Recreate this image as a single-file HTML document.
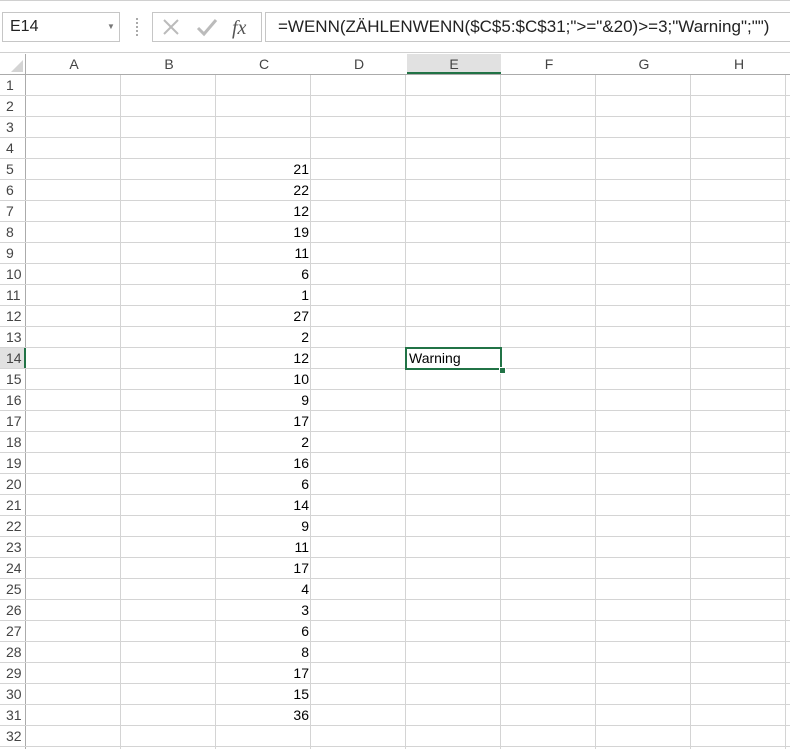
<!DOCTYPE html>
<html><head><meta charset="utf-8"><style>
body{margin:0;width:790px;height:749px;overflow:hidden;background:#fff;font-family:"Liberation Sans",sans-serif;position:relative}
.a{position:absolute}
#grid{left:26px;top:75px;width:764px;height:674px;
background-image:repeating-linear-gradient(to right,transparent 0 94px,#d4d4d4 94px 95px),repeating-linear-gradient(to bottom,transparent 0 20px,#d4d4d4 20px 21px)}
.rh{position:absolute;left:0;width:25px;height:20px;font-size:14px;color:#444;line-height:20px;padding-left:6px;box-sizing:border-box}
.ch{position:absolute;top:54px;width:94px;height:20px;text-align:center;font-size:14px;color:#444;line-height:20px}
.n{position:absolute;left:217px;width:92px;text-align:right;font-size:14px;line-height:20px;height:20px;color:#000}
</style></head><body>
<div class="a" style="left:0;top:0;width:790px;height:1px;background:#d0d0d0"></div>
<div class="a" style="left:2px;top:12px;width:118px;height:30px;border:1px solid #c6c6c6;box-sizing:border-box;font-size:16px;line-height:28px;padding-left:7px;color:#222">E14<span class="a" style="left:104px;top:0;font-size:8px;color:#777">▼</span></div>
<div class="a" style="left:136px;top:18px;width:2px;height:18px;background:repeating-linear-gradient(to bottom,#aaa 0 2px,transparent 2px 4px)"></div>
<div class="a" style="left:152px;top:12px;width:110px;height:30px;border:1px solid #c6c6c6;box-sizing:border-box"></div>
<svg class="a" style="left:160px;top:16px" width="100" height="24"><path d="M4 4L18 18M18 4L4 18" stroke="#bbb" stroke-width="2"/><path d="M38 12L44 18L56 4" stroke="#bbb" stroke-width="3" fill="none"/><text x="72" y="18" font-family="Liberation Serif" font-style="italic" font-size="20" fill="#555">fx</text></svg>
<div class="a" style="left:265px;top:12px;width:530px;height:30px;border:1px solid #c6c6c6;box-sizing:border-box;font-size:17px;line-height:28px;padding-left:12px;color:#222;white-space:nowrap">=WENN(ZÄHLENWENN($C$5:$C$31;"&gt;="&amp;20)&gt;=3;"Warning";"")</div>
<div class="a" style="left:0;top:52px;width:790px;height:1px;background:#d0d0d0"></div>
<div class="a" style="left:0;top:54px;width:790px;height:21px;border-bottom:1px solid #ababab;box-sizing:border-box"></div>
<svg class="a" style="left:10px;top:59px" width="14" height="14"><path d="M13 1V13H1Z" fill="#d4d4d4"/></svg>
<div class="a" style="left:407px;top:54px;width:94px;height:20px;background:#e1e1e1;border-bottom:2px solid #217346;box-sizing:border-box"></div>
<div id="grid" class="a"></div>
<div class="a" style="left:25px;top:54px;width:1px;height:695px;background:#ababab"></div>
<div class="a" style="left:0;top:348px;width:25px;height:20px;background:#e1e1e1"></div>
<div class="a" style="left:24px;top:348px;width:2px;height:21px;background:#217346"></div>
<div id="h"></div>
<div class="a" style="left:405px;top:347px;width:97px;height:23px;border:2px solid #217346;box-sizing:border-box"></div>
<div class="a" style="left:499px;top:367px;width:5px;height:5px;background:#217346;border:1px solid #fff"></div>
<div class="a" style="left:409px;top:348px;font-size:14px;line-height:20px">Warning</div>
<script>
var h='',c='ABCDEFGH';
for(var i=0;i<8;i++)h+='<div class="ch" style="left:'+(27+95*i)+'px">'+c[i]+'</div>';
for(var r=1;r<=32;r++)h+='<div class="rh" style="top:'+(75+21*(r-1))+'px">'+r+'</div><div class="a" style="left:0;top:'+(95+21*(r-1))+'px;width:26px;height:1px;background:#d4d4d4"></div>';
var v=[21,22,12,19,11,6,1,27,2,12,10,9,17,2,16,6,14,9,11,17,4,3,6,8,17,15,36];
for(var k=0;k<v.length;k++)h+='<div class="n" style="top:'+(75+21*(k+4))+'px">'+v[k]+'</div>';
document.getElementById('h').innerHTML=h;
</script>
</body></html>
